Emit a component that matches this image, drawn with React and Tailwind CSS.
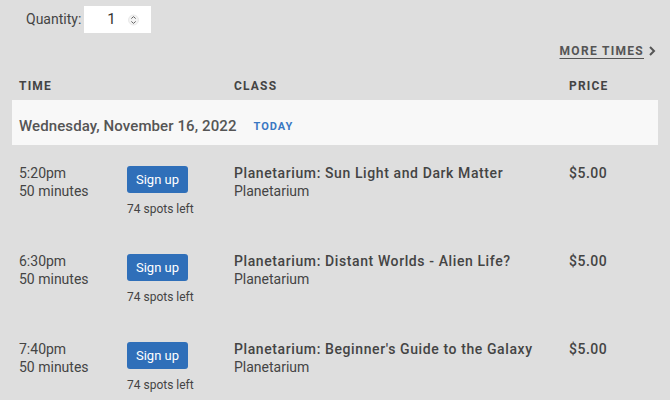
import React from "react";

const rows = [
  { time: "5:20pm", title: "Planetarium: Sun Light and Dark Matter" },
  { time: "6:30pm", title: "Planetarium: Distant Worlds - Alien Life?" },
  { time: "7:40pm", title: "Planetarium: Beginner's Guide to the Galaxy" },
];

export default function App() {
  return (
    <div
      className="w-[670px] h-[400px] overflow-hidden bg-[#dedede] text-[#444]"
      style={{ fontFamily: "Roboto, 'Liberation Sans', sans-serif" }}
    >
      <div className="flex items-center h-[39px] pt-[0px] pl-[26px]">
        <span className="text-[14px] text-[#444] mr-[3px]">Quantity:</span>
        <div className="w-[67px] h-[27px] bg-white flex items-center">
          <span className="ml-[23px] text-[15px] text-[#333]">1</span>
          <svg width="11" height="14" viewBox="0 0 11 14" className="ml-[12px]">
            <circle cx="5.5" cy="7" r="5" fill="#f4f4f4" stroke="#ddd" strokeWidth="0.6" />
            <path d="M3.3 5.6 L5.5 3.6 L7.7 5.6" fill="none" stroke="#666" strokeWidth="1" />
            <path d="M3.3 8.4 L5.5 10.4 L7.7 8.4" fill="none" stroke="#666" strokeWidth="1" />
          </svg>
        </div>
      </div>
      <div className="flex justify-end pr-[14px] mt-[5px] h-[14px]">
        <span className="flex items-center text-[12px] font-bold tracking-[1.3px] text-[#555] underline underline-offset-[3px] leading-none">
          MORE TIMES
          <svg width="8" height="10" viewBox="0 0 8 10" className="ml-[4px]">
            <path d="M2 1 L6 5 L2 9" fill="none" stroke="#555" strokeWidth="2" />
          </svg>
        </span>
      </div>
      <div className="flex mt-[19px] h-[17px] items-center text-[12px] font-bold tracking-[1.2px] text-[#444] leading-none">
        <div className="w-[234px] pl-[19px]">TIME</div>
        <div className="w-[335px]">CLASS</div>
        <div>PRICE</div>
      </div>
      <div className="mx-[12px] mt-[6px] h-[45px] bg-[#f8f8f8] flex items-end pb-[8px] pl-[7px]">
        <span className="text-[15px] font-medium text-[#555] tracking-[0.1px]">Wednesday, November 16, 2022</span>
        <span className="ml-[17px] mb-[2px] text-[11px] font-bold tracking-[1px] text-[#3a78c3]">TODAY</span>
      </div>
      <div className="flex flex-col pt-[19px]">
        {rows.map((r) => (
          <div key={r.time} className="flex h-[88px]">
            <div className="w-[127px] pl-[19px] text-[14px] leading-[18px] text-[#444]">
              <div>{r.time}</div>
              <div>50 minutes</div>
            </div>
            <div className="w-[107px] flex flex-col items-start mt-[2px]">
              <button className="w-[61px] h-[27px] rounded-[3px] bg-[#2f6fb9] text-white text-[13px] leading-none">
                Sign up
              </button>
              <span className="mt-[7px] text-[12px] text-[#444]">74 spots left</span>
            </div>
            <div className="w-[335px] leading-[18px]">
              <div className="text-[14px] font-medium tracking-[0.6px] text-[#444]">{r.title}</div>
              <div className="text-[14px] text-[#444]">Planetarium</div>
            </div>
            <div className="text-[14px] font-medium tracking-[0.5px] leading-[18px] text-[#444]">$5.00</div>
          </div>
        ))}
      </div>
    </div>
  );
}
